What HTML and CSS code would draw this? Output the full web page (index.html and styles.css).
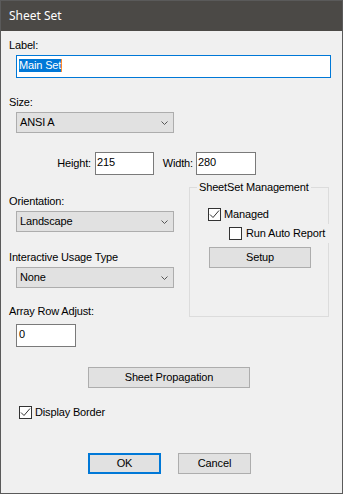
FILE: index.html
```html
<!DOCTYPE html>
<html>
<head>
<meta charset="utf-8">
<link rel="stylesheet" href="styles.css">
</head>
<body>
<div class="window">
  <div class="titlebar">Sheet Set</div>
  <div class="content">
    <div class="lbl">Label:</div>
    <div class="textbox textbox-main"><span class="sel">Main Set</span></div>

    <div class="lbl lbl-size">Size:</div>
    <div class="combo"><span>ANSI A</span><svg class="chev" width="7" height="4" viewBox="0 0 7 4"><polyline points="0.5,0.5 3.5,3.5 6.5,0.5" fill="none" stroke="#555" stroke-width="1"/></svg></div>

    <div class="dims">
      <span class="dim-label dim-label-h">Height:</span>
      <div class="textbox dim-box dim-box-h">215</div>
      <span class="dim-label dim-label-w">Width:</span>
      <div class="textbox dim-box dim-box-w">280</div>
    </div>

    <div class="middle">
      <div class="left-col">
        <div class="lbl lbl-orient">Orientation:</div>
        <div class="combo"><span>Landscape</span><svg class="chev" width="7" height="4" viewBox="0 0 7 4"><polyline points="0.5,0.5 3.5,3.5 6.5,0.5" fill="none" stroke="#555" stroke-width="1"/></svg></div>
        <div class="lbl lbl-usage">Interactive Usage Type</div>
        <div class="combo"><span>None</span><svg class="chev" width="7" height="4" viewBox="0 0 7 4"><polyline points="0.5,0.5 3.5,3.5 6.5,0.5" fill="none" stroke="#555" stroke-width="1"/></svg></div>
        <div class="lbl lbl-array">Array Row Adjust:</div>
        <div class="textbox textbox-array">0</div>
      </div>

      <fieldset class="group">
        <legend>SheetSet Management</legend>
        <div class="check-row row-managed">
          <svg class="checkbox" width="13" height="13" viewBox="0 0 13 13"><rect x="0.5" y="0.5" width="12" height="12" fill="#fff" stroke="#333"/><polyline points="2,6.5 5,9.5 11,2.5" fill="none" stroke="#333" stroke-width="1"/></svg>
          <span class="check-text">Managed</span>
        </div>
        <div class="check-row row-run">
          <svg class="checkbox" width="13" height="13" viewBox="0 0 13 13"><rect x="0.5" y="0.5" width="12" height="12" fill="#fff" stroke="#333"/></svg>
          <span class="check-text run-text">Run Auto Report</span>
        </div>
        <button class="btn setup">Setup</button>
      </fieldset>
    </div>

    <button class="btn propagate">Sheet Propagation</button>

    <div class="check-row display-row">
      <svg class="checkbox" width="13" height="13" viewBox="0 0 13 13"><rect x="0.5" y="0.5" width="12" height="12" fill="#fff" stroke="#333"/><polyline points="2,6.5 5,9.5 11,2.5" fill="none" stroke="#333" stroke-width="1"/></svg>
      <span class="check-text">Display Border</span>
    </div>

    <div class="actions">
      <button class="btn ok">OK</button>
      <button class="btn cancel">Cancel</button>
    </div>
  </div>
</div>
</body>
</html>
```

FILE: styles.css
```css
* {
  box-sizing: border-box;
}

body {
  margin: 0;
  font-family: "Liberation Sans", Arial, sans-serif;
  font-size: 11px;
  line-height: 13px;
  letter-spacing: -0.15px;
  color: #000;
}

.window {
  width: 343px;
  height: 494px;
  border: 1px solid #5a5a5a;
  background: #f0f0f0;
}

.titlebar {
  height: 30px;
  background: #4b4946;
  color: #fff;
  font-family: "Noto Sans", sans-serif;
  font-size: 12px;
  line-height: 29px;
  letter-spacing: 0;
  padding-left: 8px;
}

.content {
  padding: 8px 8px 0;
}

.lbl {
  line-height: 13px;
}

.textbox {
  background: #fff;
  border: 1px solid #7a7a7a;
  height: 23px;
  padding: 3px 0 0 2px;
  line-height: 13px;
}

.textbox-main {
  margin: 3px 0 0 7px;
  width: 315px;
  border-color: #0078d7;
}

.sel {
  display: inline-block;
  background: #0078d7;
  color: #fff;
  border-right: 1px solid #ff8728;
}

.lbl-size {
  margin-top: 18px;
}

.combo {
  display: flex;
  align-items: center;
  justify-content: space-between;
  width: 158px;
  height: 21px;
  margin: 3px 0 0 7px;
  padding: 0 5px 0 3px;
  background: #e1e1e1;
  border: 1px solid #adadad;
}

.chev {
  display: block;
}

.dims {
  display: flex;
  align-items: center;
  margin: 19px 0 0 41px;
}

.dim-label {
  text-align: right;
}

.dim-label-h {
  width: 41px;
  margin-right: 4px;
}

.dim-label-w {
  width: 39px;
  margin-right: 3px;
}

.dim-box {
  padding-left: 1px;
}

.dim-box-h {
  width: 59px;
}

.dim-box-w {
  width: 60px;
}

.middle {
  display: flex;
  align-items: flex-start;
  margin-top: 6px;
}

.left-col {
  width: 180px;
}

.lbl-orient {
  margin-top: 14px;
}

.lbl-usage {
  margin-top: 19px;
}

.lbl-array {
  margin-top: 17px;
}

.textbox-array {
  margin: 6px 0 0 7px;
  width: 60px;
}

.group {
  margin: 0;
  width: 140px;
  min-width: 0;
  border: 1px solid #dcdcdc;
  padding: 0 0 48px;
}

.group legend {
  margin-left: 7px;
  padding: 0 2px;
  line-height: 13px;
}

.check-row {
  display: flex;
  align-items: center;
}

.checkbox {
  display: block;
  flex: none;
}

.check-text {
  margin-left: 3px;
  line-height: 13px;
}

.row-managed {
  margin: 14px 0 0 18px;
}

.row-run {
  margin: 3px 0 0 39px;
}

.run-text {
  margin-left: 4px;
  width: 85px;
  flex: none;
  line-height: 19px;
  background: #f0f0f0;
  white-space: nowrap;
}

.btn {
  display: flex;
  align-items: center;
  justify-content: center;
  height: 21px;
  padding: 0;
  font: inherit;
  letter-spacing: inherit;
  line-height: 13px;
  color: #000;
  background: #e1e1e1;
  border: 1px solid #adadad;
  border-radius: 0;
}

.setup {
  margin: 4px 0 0 19px;
  width: 102px;
}

.propagate {
  margin: 20px 0 0 79px;
  width: 162px;
}

.display-row {
  margin: 18px 0 0 10px;
}

.actions {
  display: flex;
  gap: 17px;
  margin: 34px 0 0 79px;
}

.ok {
  width: 73px;
  border: 2px solid #0078d7;
}

.cancel {
  width: 73px;
}
```
